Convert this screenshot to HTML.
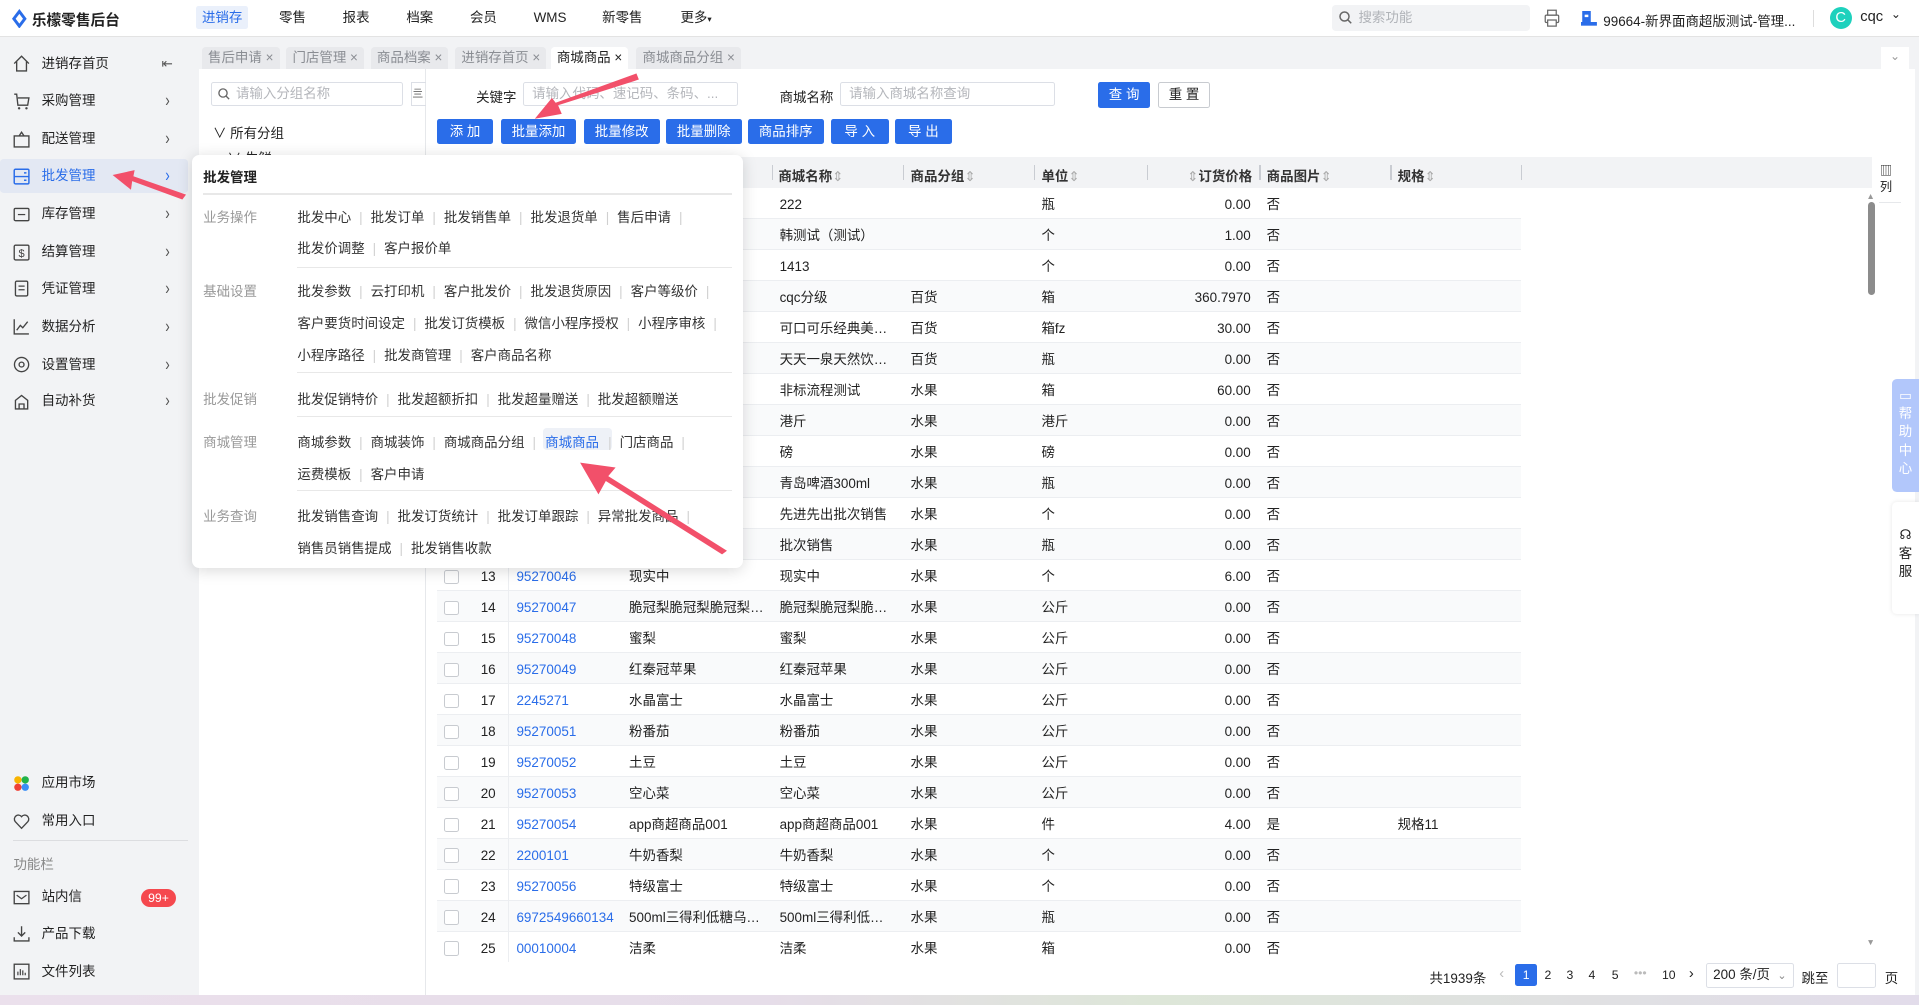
<!DOCTYPE html>
<html><head><meta charset="utf-8"><style>
*{margin:0;padding:0;box-sizing:border-box}
html,body{width:1919px;height:1005px;overflow:hidden;background:#f2f3f5}
#root{zoom:1.22385;width:1568px;height:821px;position:relative;font-family:"Liberation Sans","Noto Sans CJK SC",sans-serif;font-size:11px;color:#222;background:#f2f3f5}
.a{position:absolute;white-space:nowrap}
.top{left:0;top:0;width:1568px;height:30px;background:#fff;border-bottom:1px solid #e3e3e3}
.nav{top:5px;height:19px;line-height:19px;font-size:11px}
.side .it{position:absolute;left:0;width:154px;height:28px;line-height:28px;font-size:11px}
.side .it .t{position:absolute;left:34px}
.side .it .ch{position:absolute;left:135px;color:#555;transform:scaleY(1.4)}
.side .it svg{position:absolute;left:11px;top:7px}
.tab{top:38px;height:18px;line-height:18px;padding:0 5px;background:#e8e9ec;color:#8a8d93;font-size:11px;border-radius:3px 3px 0 0}
.tab.on{background:#fff;color:#222}
.btn{top:97px;height:21px;line-height:21px;background:#2a6de9;color:#fff;text-align:center;border-radius:2px;font-size:11px}
.inp{height:20px;border:1px solid #dcdfe6;border-radius:2px;background:#fff;color:#b4b6bb;line-height:18px;padding-left:7px;font-size:11px}
.th{top:128px;height:26px;left:357px;width:1173px;background:#f2f3f5}
.hd{top:135px;font-weight:bold;font-size:11px;color:#333}
.sep{top:135px;width:1px;height:12px;background:#c9ccd2}
.row{position:absolute;left:357px;width:886px;height:25.3px;border-bottom:1px solid #eceef1;line-height:27px;font-size:11px}
.row.g{background:#f9fafb}
.row span{position:absolute;white-space:nowrap}
.row .cb{left:6px;top:8px;width:12px;height:12px;border:1px solid #c8cbd0;border-radius:2px;background:#fff}
.row .n{right:838px}
.row .vl{left:58px;top:0;width:1px;height:25px;background:#eceef1}
.row .c2{left:65px;color:#2a6de9}
.row .c3{left:157px}
.row .c4{left:280px}
.row .c5{left:387px}
.row .c6{left:494px}
.row .c7{right:221px}
.row .c8{left:678px}
.row .c9{left:785px}
.pop{left:157px;top:127px;width:450px;height:337px;background:#fff;border-radius:6px;box-shadow:0 2px 12px rgba(0,0,0,.15)}
.pl{color:#999;font-size:11px}
.pi{font-size:11px;color:#333}
.pi i{font-style:normal;color:#d0d0d0;margin:0 6.5px}
.hl{position:absolute;height:1px;background:#e8e8e8}
</style></head><body><div id="root">

<div class="a top"></div>
<svg class="a" style="left:10px;top:7px" width="12" height="16" viewBox="0 0 12 16"><path d="M6 0 L12 8 L6 16 L0 8Z" fill="#2a6de9"/><path d="M6 4 L9 8 L6 12 L3 8Z" fill="#fff"/></svg>
<div class="a" style="left:26px;top:7px;font-weight:bold;font-size:12px;color:#222">乐檬零售后台</div>
<div class="a nav" style="left:160px;width:43px;background:#eaf0fb;color:#2a6de9;text-align:center;border-radius:2px">进销存</div>
<div class="a nav" style="left:228px">零售</div>
<div class="a nav" style="left:280px">报表</div>
<div class="a nav" style="left:332px">档案</div>
<div class="a nav" style="left:384px">会员</div>
<div class="a nav" style="left:436px">WMS</div>
<div class="a nav" style="left:492px">新零售</div>
<div class="a nav" style="left:556px">更多<span style="font-size:7px">▾</span></div>
<div class="a" style="left:1088px;top:4px;width:162px;height:21px;background:#f2f3f5;border-radius:3px;color:#b0b3b8;line-height:21px;padding-left:22px">搜索功能</div>
<svg class="a" style="left:1094px;top:9px" width="11" height="11" viewBox="0 0 11 11"><circle cx="4.5" cy="4.5" r="3.7" fill="none" stroke="#666" stroke-width="1.2"/><path d="M7.3 7.3 L10 10" stroke="#666" stroke-width="1.2"/></svg>
<svg class="a" style="left:1262px;top:7px" width="13" height="15" viewBox="0 0 13 15"><rect x="3" y="1" width="7" height="4" fill="none" stroke="#666"/><rect x="1" y="5" width="11" height="6" rx="1" fill="none" stroke="#666"/><rect x="3" y="9" width="7" height="5" fill="#fff" stroke="#666"/></svg>
<svg class="a" style="left:1292px;top:9px" width="13" height="12" viewBox="0 0 13 12"><rect x="1" y="0" width="7" height="10" fill="#2a6de9"/><rect x="0" y="9" width="13" height="3" fill="#2a6de9"/><rect x="3" y="3" width="3" height="2" fill="#fff"/></svg>
<div class="a" style="left:1310px;top:8px">99664-新界面商超版测试-管理...</div>
<div class="a" style="left:1481px;top:8px;width:1px;height:14px;background:#ddd"></div>
<div class="a" style="left:1495px;top:6px;width:18px;height:18px;border-radius:50%;background:#1ed1bd;color:#fff;text-align:center;line-height:18px;font-size:12px">C</div>
<div class="a" style="left:1520px;top:7px;font-size:12px">cqc</div>
<div class="a" style="left:1545px;top:6px;font-size:10px">&#8964;</div>

<div class="side">
<div class="it" style="top:38px"><svg width="14" height="14" viewBox="0 0 14 14"><path d="M1 7 L7 1 L13 7 M3 5 V13 H11 V5" fill="none" stroke="#444" stroke-width="1.1"/></svg><span class="t">进销存首页</span><span class="ch" style="left:132px;transform:none">⇤</span></div>
<div class="it" style="top:69px"><svg width="14" height="14" viewBox="0 0 14 14"><path d="M1 1 H3 L4 10 H12 L13 4 H4" fill="none" stroke="#444" stroke-width="1.1"/><circle cx="5" cy="12.5" r="1" fill="#444"/><circle cx="11" cy="12.5" r="1" fill="#444"/></svg><span class="t">采购管理</span><span class="ch">›</span></div>
<div class="it" style="top:100px"><svg width="14" height="14" viewBox="0 0 14 14"><path d="M1 4 H13 V13 H1Z M5 4 L7 1 L9 4" fill="none" stroke="#444" stroke-width="1.1"/></svg><span class="t">配送管理</span><span class="ch">›</span></div>
<div class="it" style="top:130px;background:#e3e8f3;color:#2a6de9;border-radius:3px"><svg width="14" height="14" viewBox="0 0 14 14"><rect x="1" y="1" width="12" height="12" rx="1" fill="none" stroke="#2a6de9" stroke-width="1.2"/><path d="M1 7 H13 M9 4 H11 M9 10 H11" stroke="#2a6de9" stroke-width="1.2"/></svg><span class="t">批发管理</span><span class="ch" style="color:#2a6de9">›</span></div>
<div class="it" style="top:161px"><svg width="14" height="14" viewBox="0 0 14 14"><rect x="1" y="2" width="12" height="10" rx="1" fill="none" stroke="#444" stroke-width="1.1"/><path d="M4 7 H10" stroke="#444"/></svg><span class="t">库存管理</span><span class="ch">›</span></div>
<div class="it" style="top:192px"><svg width="14" height="14" viewBox="0 0 14 14"><rect x="1" y="1" width="12" height="12" rx="1" fill="none" stroke="#444" stroke-width="1.1"/><text x="7" y="10.5" font-size="9" text-anchor="middle" fill="#444">$</text></svg><span class="t">结算管理</span><span class="ch">›</span></div>
<div class="it" style="top:222px"><svg width="14" height="14" viewBox="0 0 14 14"><rect x="2" y="1" width="10" height="12" rx="1" fill="none" stroke="#444" stroke-width="1.1"/><path d="M4.5 5 H9.5 M4.5 8 H9.5" stroke="#444"/></svg><span class="t">凭证管理</span><span class="ch">›</span></div>
<div class="it" style="top:253px"><svg width="14" height="14" viewBox="0 0 14 14"><path d="M1 1 V13 H13 M3 10 L6 6 L8 8 L12 3" fill="none" stroke="#444" stroke-width="1.1"/></svg><span class="t">数据分析</span><span class="ch">›</span></div>
<div class="it" style="top:284px"><svg width="14" height="14" viewBox="0 0 14 14"><circle cx="7" cy="7" r="5.8" fill="none" stroke="#444" stroke-width="1.1"/><circle cx="7" cy="7" r="2" fill="none" stroke="#444" stroke-width="1.1"/></svg><span class="t">设置管理</span><span class="ch">›</span></div>
<div class="it" style="top:314px"><svg width="14" height="14" viewBox="0 0 14 14"><path d="M2 6 L7 2 L12 6 V13 H2Z M5 13 V9 H9 V13" fill="none" stroke="#444" stroke-width="1.1"/></svg><span class="t">自动补货</span><span class="ch">›</span></div>
<div class="it" style="top:626px"><svg width="14" height="14" viewBox="0 0 14 14"><circle cx="4" cy="4" r="3" fill="#f8b400"/><circle cx="10" cy="4" r="3" fill="#22b34a"/><circle cx="4" cy="10" r="3" fill="#ef4136"/><circle cx="10" cy="10" r="3" fill="#3a8ef6"/></svg><span class="t">应用市场</span></div>
<div class="it" style="top:657px"><svg width="14" height="14" viewBox="0 0 14 14"><path d="M7 12.5 L1.8 7 A3 3 0 0 1 7 3 A3 3 0 0 1 12.2 7Z" fill="none" stroke="#444" stroke-width="1.1"/></svg><span class="t">常用入口</span></div>
<div class="it" style="top:719px"><svg width="14" height="14" viewBox="0 0 14 14"><rect x="1" y="2" width="12" height="10" fill="none" stroke="#444" stroke-width="1.1"/><path d="M3 5 L7 8 L11 5" fill="none" stroke="#444"/></svg><span class="t">站内信</span></div>
<div class="it" style="top:749px"><svg width="14" height="14" viewBox="0 0 14 14"><path d="M7 1 V9 M4 6 L7 9 L10 6 M1 10 V13 H13 V10" fill="none" stroke="#444" stroke-width="1.1"/></svg><span class="t">产品下载</span></div>
<div class="it" style="top:780px"><svg width="14" height="14" viewBox="0 0 14 14"><rect x="1" y="1" width="12" height="12" fill="none" stroke="#444" stroke-width="1.1"/><path d="M4 10 V7 M6 10 V5 M8 10 V6 M10 10 V8" stroke="#444"/></svg><span class="t">文件列表</span></div>
</div>
<div class="a" style="left:11px;top:686px;width:143px;height:1px;background:#dcdde0"></div>
<div class="a" style="left:11px;top:697px;color:#888">功能栏</div>
<div class="a" style="left:115px;top:726px;width:29px;height:15px;border-radius:8px;background:#f5484e;color:#fff;font-size:10px;line-height:15px;text-align:center">99+</div>

<div class="a tab" style="left:165px">售后申请 ×</div>
<div class="a tab" style="left:234px">门店管理 ×</div>
<div class="a tab" style="left:303px">商品档案 ×</div>
<div class="a tab" style="left:372px">进销存首页 ×</div>
<div class="a tab on" style="left:450px">商城商品 ×</div>
<div class="a tab" style="left:520px">商城商品分组 ×</div>
<div class="a" style="left:1537px;top:38px;width:23px;height:18px;background:#fff;color:#999;text-align:center;font-size:10px;line-height:16px">&#8964;</div>

<div class="a" style="left:163px;top:56px;width:1402px;height:757px;background:#fff"></div>
<div class="a" style="left:347px;top:56px;width:1px;height:757px;background:#e6e8eb"></div>
<div class="a inp" style="left:172px;top:67px;width:157px;padding-left:20px">请输入分组名称</div>
<svg class="a" style="left:178px;top:72px" width="10" height="10" viewBox="0 0 11 11"><circle cx="4.5" cy="4.5" r="3.7" fill="none" stroke="#666" stroke-width="1.2"/><path d="M7.3 7.3 L10 10" stroke="#666" stroke-width="1.2"/></svg>
<div class="a" style="left:336px;top:67px;width:12px;height:20px;border:1px solid #dcdfe6;border-right:none;font-size:9px;line-height:18px;color:#666">亖</div>
<div class="a" style="left:174px;top:100px">∨ 所有分组</div>
<div class="a" style="left:186px;top:120px">∨ 生鲜</div>

<div class="a" style="left:389px;top:70px">关键字</div>
<div class="a inp" style="left:427px;top:67px;width:176px">请输入代码、速记码、条码、...</div>
<div class="a" style="left:637px;top:70px">商城名称</div>
<div class="a inp" style="left:686px;top:67px;width:176px">请输入商城名称查询</div>
<div class="a btn" style="left:897px;top:67px;width:43px;height:21px">查 询</div>
<div class="a" style="left:946px;top:67px;width:43px;height:21px;border:1px solid #c8cbd0;border-radius:2px;text-align:center;line-height:19px">重 置</div>

<div class="a btn" style="left:357px;width:46px">添 加</div>
<div class="a btn" style="left:409px;width:62px">批量添加</div>
<div class="a btn" style="left:477px;width:62px">批量修改</div>
<div class="a btn" style="left:544px;width:62px">批量删除</div>
<div class="a btn" style="left:611px;width:62px">商品排序</div>
<div class="a btn" style="left:679px;width:47px">导 入</div>
<div class="a btn" style="left:731px;width:47px">导 出</div>

<div class="a th"></div>
<div class="a sep" style="left:631px"></div><div class="a hd" style="left:636px">商城名称<span style="color:#aaa;font-weight:normal">⇕</span></div>
<div class="a sep" style="left:738px"></div><div class="a hd" style="left:744px">商品分组<span style="color:#aaa;font-weight:normal">⇕</span></div>
<div class="a sep" style="left:845px"></div><div class="a hd" style="left:851px">单位<span style="color:#aaa;font-weight:normal">⇕</span></div>
<div class="a sep" style="left:937px"></div><div class="a hd" style="left:970px"><span style="color:#aaa;font-weight:normal">⇕</span>订货价格</div>
<div class="a sep" style="left:1029px"></div><div class="a hd" style="left:1035px">商品图片<span style="color:#aaa;font-weight:normal">⇕</span></div>
<div class="a sep" style="left:1136px"></div><div class="a hd" style="left:1142px">规格<span style="color:#aaa;font-weight:normal">⇕</span></div>
<div class="a sep" style="left:1243px"></div>
<div class="a" style="left:1536px;top:134px;width:14px;height:30px;font-size:10px;line-height:13px;color:#222">▥<br>列</div>
<div class="a" style="left:1535px;top:165px;width:18px;height:1px;background:#e6e8eb"></div>
<div class="a" style="left:1525px;top:156px;font-size:7px;color:#999">▲</div>
<div class="a" style="left:1526px;top:165px;width:6px;height:76px;border-radius:3px;background:#8c8c8c"></div>
<div class="a" style="left:1525px;top:766px;font-size:7px;color:#999">▼</div>

<div class="a" style="left:0;top:0">
<div class="row" style="top:154px"><span class="c4">222</span><span class="c6">瓶</span><span class="c7">0.00</span><span class="c8">否</span></div>
<div class="row g" style="top:179.3px"><span class="c4">韩测试（测试）</span><span class="c6">个</span><span class="c7">1.00</span><span class="c8">否</span></div>
<div class="row" style="top:204.6px"><span class="c4">1413</span><span class="c6">个</span><span class="c7">0.00</span><span class="c8">否</span></div>
<div class="row g" style="top:229.9px"><span class="c4">cqc分级</span><span class="c5">百货</span><span class="c6">箱</span><span class="c7">360.7970</span><span class="c8">否</span></div>
<div class="row" style="top:255.2px"><span class="c4">可口可乐经典美…</span><span class="c5">百货</span><span class="c6">箱fz</span><span class="c7">30.00</span><span class="c8">否</span></div>
<div class="row g" style="top:280.5px"><span class="c4">天天一泉天然饮…</span><span class="c5">百货</span><span class="c6">瓶</span><span class="c7">0.00</span><span class="c8">否</span></div>
<div class="row" style="top:305.8px"><span class="c4">非标流程测试</span><span class="c5">水果</span><span class="c6">箱</span><span class="c7">60.00</span><span class="c8">否</span></div>
<div class="row g" style="top:331.1px"><span class="c4">港斤</span><span class="c5">水果</span><span class="c6">港斤</span><span class="c7">0.00</span><span class="c8">否</span></div>
<div class="row" style="top:356.4px"><span class="c4">磅</span><span class="c5">水果</span><span class="c6">磅</span><span class="c7">0.00</span><span class="c8">否</span></div>
<div class="row g" style="top:381.7px"><span class="c4">青岛啤酒300ml</span><span class="c5">水果</span><span class="c6">瓶</span><span class="c7">0.00</span><span class="c8">否</span></div>
<div class="row" style="top:407px"><span class="c4">先进先出批次销售</span><span class="c5">水果</span><span class="c6">个</span><span class="c7">0.00</span><span class="c8">否</span></div>
<div class="row g" style="top:432.3px"><span class="c4">批次销售</span><span class="c5">水果</span><span class="c6">瓶</span><span class="c7">0.00</span><span class="c8">否</span></div>
<div class="row" style="top:457.6px"><span class="cb"></span><span class="n">13</span><span class="vl"></span><span class="c2">95270046</span><span class="c3">现实中</span><span class="c4">现实中</span><span class="c5">水果</span><span class="c6">个</span><span class="c7">6.00</span><span class="c8">否</span></div>
<div class="row g" style="top:482.9px"><span class="cb"></span><span class="n">14</span><span class="vl"></span><span class="c2">95270047</span><span class="c3">脆冠梨脆冠梨脆冠梨…</span><span class="c4">脆冠梨脆冠梨脆…</span><span class="c5">水果</span><span class="c6">公斤</span><span class="c7">0.00</span><span class="c8">否</span></div>
<div class="row" style="top:508.2px"><span class="cb"></span><span class="n">15</span><span class="vl"></span><span class="c2">95270048</span><span class="c3">蜜梨</span><span class="c4">蜜梨</span><span class="c5">水果</span><span class="c6">公斤</span><span class="c7">0.00</span><span class="c8">否</span></div>
<div class="row g" style="top:533.5px"><span class="cb"></span><span class="n">16</span><span class="vl"></span><span class="c2">95270049</span><span class="c3">红秦冠苹果</span><span class="c4">红秦冠苹果</span><span class="c5">水果</span><span class="c6">公斤</span><span class="c7">0.00</span><span class="c8">否</span></div>
<div class="row" style="top:558.8px"><span class="cb"></span><span class="n">17</span><span class="vl"></span><span class="c2">2245271</span><span class="c3">水晶富士</span><span class="c4">水晶富士</span><span class="c5">水果</span><span class="c6">公斤</span><span class="c7">0.00</span><span class="c8">否</span></div>
<div class="row g" style="top:584.1px"><span class="cb"></span><span class="n">18</span><span class="vl"></span><span class="c2">95270051</span><span class="c3">粉番茄</span><span class="c4">粉番茄</span><span class="c5">水果</span><span class="c6">公斤</span><span class="c7">0.00</span><span class="c8">否</span></div>
<div class="row" style="top:609.4px"><span class="cb"></span><span class="n">19</span><span class="vl"></span><span class="c2">95270052</span><span class="c3">土豆</span><span class="c4">土豆</span><span class="c5">水果</span><span class="c6">公斤</span><span class="c7">0.00</span><span class="c8">否</span></div>
<div class="row g" style="top:634.7px"><span class="cb"></span><span class="n">20</span><span class="vl"></span><span class="c2">95270053</span><span class="c3">空心菜</span><span class="c4">空心菜</span><span class="c5">水果</span><span class="c6">公斤</span><span class="c7">0.00</span><span class="c8">否</span></div>
<div class="row" style="top:660px"><span class="cb"></span><span class="n">21</span><span class="vl"></span><span class="c2">95270054</span><span class="c3">app商超商品001</span><span class="c4">app商超商品001</span><span class="c5">水果</span><span class="c6">件</span><span class="c7">4.00</span><span class="c8">是</span><span class="c9">规格11</span></div>
<div class="row g" style="top:685.3px"><span class="cb"></span><span class="n">22</span><span class="vl"></span><span class="c2">2200101</span><span class="c3">牛奶香梨</span><span class="c4">牛奶香梨</span><span class="c5">水果</span><span class="c6">个</span><span class="c7">0.00</span><span class="c8">否</span></div>
<div class="row" style="top:710.6px"><span class="cb"></span><span class="n">23</span><span class="vl"></span><span class="c2">95270056</span><span class="c3">特级富士</span><span class="c4">特级富士</span><span class="c5">水果</span><span class="c6">个</span><span class="c7">0.00</span><span class="c8">否</span></div>
<div class="row g" style="top:735.9px"><span class="cb"></span><span class="n">24</span><span class="vl"></span><span class="c2">6972549660134</span><span class="c3">500ml三得利低糖乌…</span><span class="c4">500ml三得利低…</span><span class="c5">水果</span><span class="c6">瓶</span><span class="c7">0.00</span><span class="c8">否</span></div>
<div class="row" style="top:761.2px;border-bottom:none"><span class="cb"></span><span class="n">25</span><span class="vl"></span><span class="c2">00010004</span><span class="c3">洁柔</span><span class="c4">洁柔</span><span class="c5">水果</span><span class="c6">箱</span><span class="c7">0.00</span><span class="c8">否</span></div>
</div>

<div class="a" style="left:1168px;top:790px">共1939条</div>
<div class="a" style="left:1225px;top:789px;color:#bbb;font-size:12px">‹</div>
<div class="a" style="left:1238px;top:788px;width:18px;height:18px;background:#2a6de9;color:#fff;border-radius:2px;text-align:center;line-height:18px;font-size:10px">1</div>
<div class="a" style="left:1262px;top:791px;font-size:10px">2</div>
<div class="a" style="left:1280px;top:791px;font-size:10px">3</div>
<div class="a" style="left:1298px;top:791px;font-size:10px">4</div>
<div class="a" style="left:1317px;top:791px;font-size:10px">5</div>
<div class="a" style="left:1335px;top:789px;font-size:10px;color:#bbb">•••</div>
<div class="a" style="left:1358px;top:791px;font-size:10px">10</div>
<div class="a" style="left:1380px;top:789px;font-size:12px">›</div>
<div class="a" style="left:1394px;top:787px;width:72px;height:20px;border:1px solid #dcdfe6;border-radius:2px;line-height:18px;padding-left:5px;font-size:11px">200 条/页 <span style="color:#888;font-size:9px;margin-left:3px">&#8964;</span></div>
<div class="a" style="left:1472px;top:790px">跳至</div>
<div class="a" style="left:1501px;top:787px;width:32px;height:20px;border:1px solid #dcdfe6;border-radius:2px"></div>
<div class="a" style="left:1540px;top:790px">页</div>

<div class="a" style="left:0;top:813px;width:1568px;height:8px;background:linear-gradient(90deg,#ebe0ec,#e6dde9 40%,#dde6d8 60%,#e2dcea)"></div>

<div class="a" style="left:1546px;top:310px;width:22px;height:92px;background:#b2c7fb;border-radius:4px 0 0 4px;color:#fff;font-size:11px;line-height:15px;text-align:center;padding-top:6px">▭<br>帮<br>助<br>中<br>心</div>
<div class="a" style="left:1546px;top:410px;width:22px;height:92px;background:#fff;border-radius:4px 0 0 4px;box-shadow:0 0 4px rgba(0,0,0,.1);font-size:11px;line-height:15px;text-align:center;padding-top:20px">☊<br>客<br>服</div>

<div class="a pop"></div>
<div class="a" style="left:166px;top:136px;font-weight:bold;font-size:11px">批发管理</div>
<div class="hl" style="left:166px;top:158px;width:432px"></div>
<div class="a pl" style="left:166px;top:168px">业务操作</div>
<div class="a pi" style="left:243px;top:168px">批发中心<i>|</i>批发订单<i>|</i>批发销售单<i>|</i>批发退货单<i>|</i>售后申请<i>|</i></div>
<div class="a pi" style="left:243px;top:194px">批发价调整<i>|</i>客户报价单</div>
<div class="hl" style="left:243px;top:218px;width:355px"></div>
<div class="a pl" style="left:166px;top:229px">基础设置</div>
<div class="a pi" style="left:243px;top:229px">批发参数<i>|</i>云打印机<i>|</i>客户批发价<i>|</i>批发退货原因<i>|</i>客户等级价<i>|</i></div>
<div class="a pi" style="left:243px;top:255px">客户要货时间设定<i>|</i>批发订货模板<i>|</i>微信小程序授权<i>|</i>小程序审核<i>|</i></div>
<div class="a pi" style="left:243px;top:281px">小程序路径<i>|</i>批发商管理<i>|</i>客户商品名称</div>
<div class="hl" style="left:243px;top:304px;width:355px"></div>
<div class="a pl" style="left:166px;top:317px">批发促销</div>
<div class="a pi" style="left:243px;top:317px">批发促销特价<i>|</i>批发超额折扣<i>|</i>批发超量赠送<i>|</i>批发超额赠送</div>
<div class="hl" style="left:243px;top:340px;width:355px"></div>
<div class="a" style="left:444px;top:350px;width:56px;height:18px;background:#eef1f7;border-radius:3px"></div>
<div class="a pl" style="left:166px;top:352px">商城管理</div>
<div class="a pi" style="left:243px;top:352px">商城参数<i>|</i>商城装饰<i>|</i>商城商品分组<i>|</i><span style="color:#2a6de9;margin:0 1px">商城商品</span><i>|</i>门店商品<i>|</i></div>
<div class="a pi" style="left:243px;top:378px">运费模板<i>|</i>客户申请</div>
<div class="hl" style="left:243px;top:400px;width:355px"></div>
<div class="a pl" style="left:166px;top:413px">业务查询</div>
<div class="a pi" style="left:243px;top:413px">批发销售查询<i>|</i>批发订货统计<i>|</i>批发订单跟踪<i>|</i>异常批发商品<i>|</i></div>
<div class="a pi" style="left:243px;top:439px">销售员销售提成<i>|</i>批发销售收款</div>

<svg class="a" style="left:0;top:0" width="1568" height="821" viewBox="0 0 1568 821">
<g fill="#f2506a">
<polygon points="520,60 522,65 456,86 459,93 437,97 451,80 454,84"/>
<polygon points="152,159 149,163 108,148 107,155 92,143 110,139 109,144"/>
<polygon points="594,450 590,453 495,393 489,404 474,378 503,382 497,389"/>
</g>
</svg>
</div></body></html>
